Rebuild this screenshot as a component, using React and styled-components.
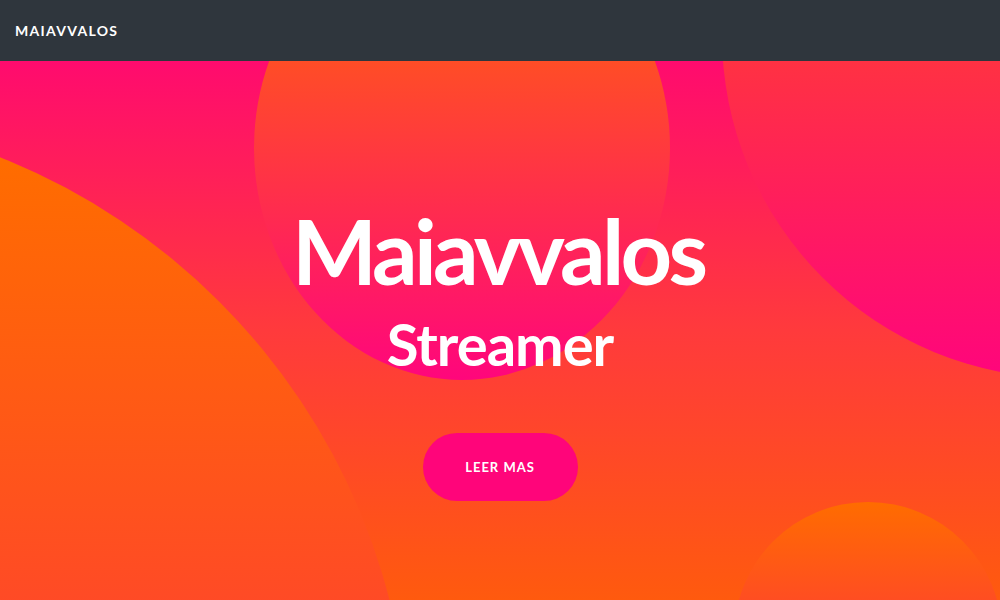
import React from "react";
import styled, { createGlobalStyle } from "styled-components";

const GlobalStyle = createGlobalStyle`
  html, body {
    margin: 0;
    padding: 0;
    height: 100%;
    overflow: hidden;
  }
  body {
    font-family: Lato, "Open Sans", sans-serif;
  }
  * { box-sizing: border-box; }
`;

const Page = styled.div`
  display: flex;
  flex-direction: column;
  height: 100vh;
`;

const Navbar = styled.nav`
  flex: 0 0 61px;
  display: flex;
  align-items: center;
  padding: 0 15px;
  background: #2f363d;
`;

const Brand = styled.a`
  color: #fff;
  font-size: 14px;
  font-weight: 700;
  letter-spacing: 1.3px;
  text-decoration: none;
  text-transform: uppercase;
`;

const Hero = styled.header`
  position: relative;
  flex: 1;
  overflow: hidden;
  background: linear-gradient(180deg, #ff0b6e 0%, #ff3a3c 50%, #ff5a0e 100%);
`;

// decorative blobs behind the hero text
const Blob = styled.span`
  position: absolute;
  left: ${p => p.$x}px;
  top: ${p => p.$y}px;
  width: ${p => p.$w}px;
  height: ${p => p.$h}px;
  border-radius: 50%;
  background: linear-gradient(180deg, ${p => p.$from} ${p => p.$start}%, ${p => p.$to} ${p => p.$end}%);
`;

const Content = styled.div`
  position: relative;
  z-index: 1;
  display: flex;
  flex-direction: column;
  align-items: center;
  padding-top: 144px;
  color: #fff;
  text-align: center;
`;

const Title = styled.h1`
  margin: 0;
  font-size: 90px;
  line-height: 1;
  font-weight: 700;
  letter-spacing: -3.8px;
  text-indent: -3.8px;
`;

const Subtitle = styled.h2`
  margin: 20px 0 0;
  font-size: 58px;
  line-height: 1;
  font-weight: 700;
  letter-spacing: -1px;
`;

const Button = styled.a`
  display: flex;
  align-items: center;
  justify-content: center;
  margin-top: 60px;
  width: 155px;
  height: 68px;
  border-radius: 34px;
  background: #ff057a;
  color: #fff;
  font-size: 13px;
  font-weight: 700;
  letter-spacing: 1px;
  text-decoration: none;
  text-transform: uppercase;
`;

const blobs = [
  { x: -892, y: 50, w: 1302, h: 1302, from: "#ff6c00", start: 4, to: "#ff4a26", end: 38 },
  { x: 254, y: -145, w: 416, h: 464, from: "#ff4d26", start: 31, to: "#ff067c", end: 100 },
  { x: 722, y: -369, w: 686, h: 686, from: "#ff3143", start: 54, to: "#ff057c", end: 100 },
  { x: 734, y: 441, w: 268, h: 268, from: "#ff6c00", start: 0, to: "#ff4d22", end: 37 },
];

export default function App() {
  return (
    <Page>
      <GlobalStyle />
      <Navbar>
        <Brand href="#">Maiavvalos</Brand>
      </Navbar>
      <Hero>
        {blobs.map((b, i) => (
          <Blob
            key={i}
            $x={b.x}
            $y={b.y}
            $w={b.w}
            $h={b.h}
            $from={b.from}
            $start={b.start}
            $to={b.to}
            $end={b.end}
          />
        ))}
        <Content>
          <Title>Maiavvalos</Title>
          <Subtitle>Streamer</Subtitle>
          <Button href="#">Leer mas</Button>
        </Content>
      </Hero>
    </Page>
  );
}
